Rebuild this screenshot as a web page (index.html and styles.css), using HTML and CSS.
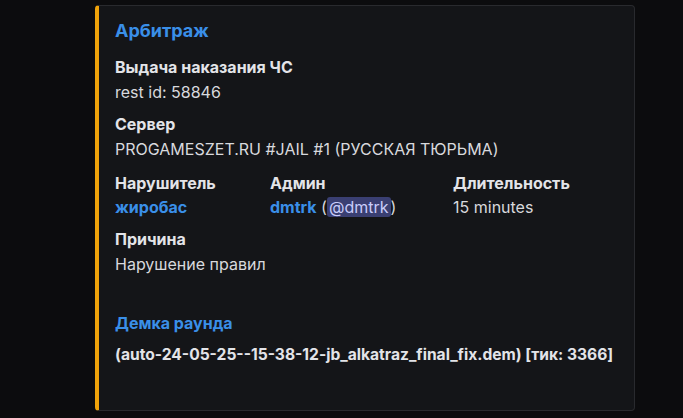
FILE: index.html
```html
<!DOCTYPE html>
<html lang="ru">
<head>
<meta charset="utf-8">
<link rel="stylesheet" href="styles.css">
</head>
<body>
<div class="page">
  <article class="embed">
    <h1 class="title">Арбитраж</h1>
    <div class="field first">
      <div class="name">Выдача наказания ЧС</div>
      <div class="value">rest id: 58846</div>
    </div>
    <div class="field">
      <div class="name">Сервер</div>
      <div class="value">PROGAMESZET.RU #JAIL #1 (РУССКАЯ ТЮРЬМА)</div>
    </div>
    <div class="inline-row">
      <div class="field">
        <div class="name">Нарушитель</div>
        <div class="value"><span class="link">жиробас</span></div>
      </div>
      <div class="field">
        <div class="name">Админ</div>
        <div class="value"><span class="link">dmtrk</span> (<span class="mention">@dmtrk</span>)</div>
      </div>
      <div class="field">
        <div class="name">Длительность</div>
        <div class="value">15 minutes</div>
      </div>
    </div>
    <div class="field reason">
      <div class="name">Причина</div>
      <div class="value">Нарушение правил</div>
    </div>
    <div class="field demo">
      <div class="name link">Демка раунда</div>
      <div class="value strong">(auto-24-05-25--15-38-12-jb_alkatraz_final_fix.dem) [тик: 3366]</div>
    </div>
  </article>
</div>
</body>
</html>
```

FILE: styles.css
```css
html, body {
  margin: 0;
  padding: 0;
}
body {
  background: #0c0c0e;
  font-family: Inter, "Noto Sans", sans-serif;
  width: 683px;
  height: 418px;
  overflow: hidden;
}
.page {
  display: flex;
  padding: 5px 0 0 95px;
}
.embed {
  box-sizing: border-box;
  width: 540px;
  height: 406px;
  background: #141518;
  border: 1px solid #292a2e;
  border-left: 4px solid #f0a30a;
  border-radius: 4px;
  padding: 14px 16px 16px 16px;
  display: flex;
  flex-direction: column;
}
.title {
  margin: 0;
  font-size: 18px;
  line-height: 22px;
  font-weight: 700;
  color: #3a8fe8;
}
.field {
  margin-top: 12px;
}
.field.first {
  margin-top: 15px;
}
.name {
  font-size: 16px;
  line-height: 20px;
  font-weight: 700;
  color: #e3e4e8;
  margin-bottom: 5px;
}
.value {
  font-size: 16px;
  line-height: 20px;
  color: #d8d9dd;
}
.value.strong {
  font-size: 15.6px;
  font-weight: 700;
  color: #e3e4e8;
}
.link {
  color: #3a8fe8;
  font-weight: 700;
}
.name.link {
  color: #3a8fe8;
}
.mention {
  background: #3a3f72;
  color: #c9cdfb;
  border-radius: 3px;
  padding: 0 2px;
}
.inline-row {
  display: grid;
  grid-template-columns: 155px 183px 1fr;
}
.inline-row .field {
  margin-top: 14px;
}
.inline-row .name {
  margin-bottom: 4px;
}
.field.reason {
  margin-top: 12px;
}
.demo {
  margin-top: 39px;
}
.demo .name {
  margin-bottom: 12px;
}
```
